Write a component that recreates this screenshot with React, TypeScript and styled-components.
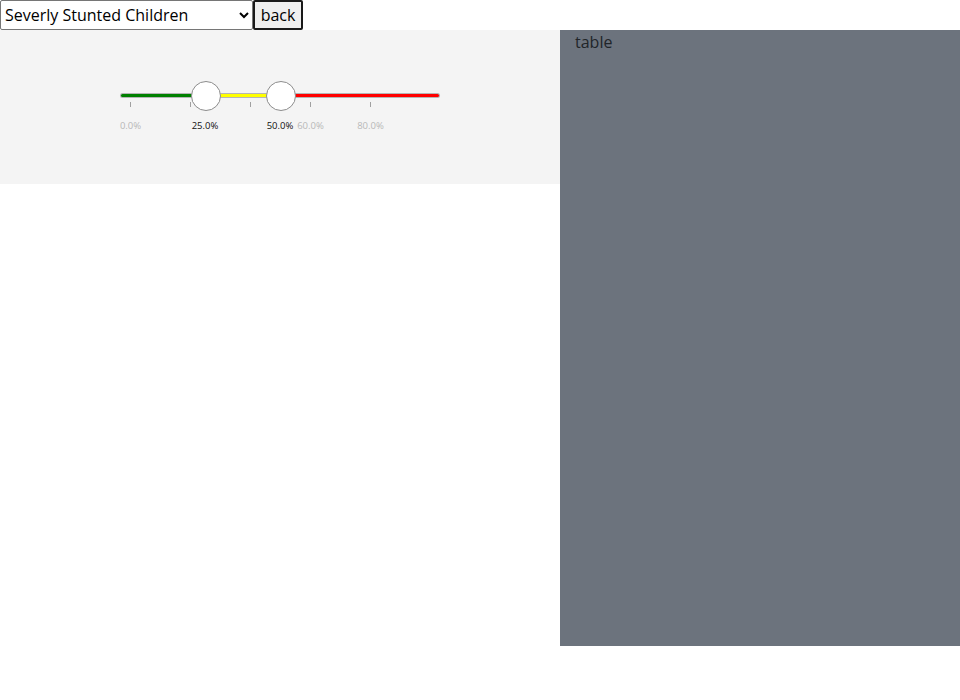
import React from "react";
import styled, { createGlobalStyle } from "styled-components";

const GlobalStyle = createGlobalStyle`
  body {
    margin: 0;
    font-family: "Open Sans", "Liberation Sans", sans-serif;
    background: #ffffff;
    color: #212529;
  }
`;

const TopBar = styled.div`
  display: flex;
  align-items: flex-start;
  height: 30px;
`;
const Select = styled.select`
  width: 253px;
  height: 30px;
  font-family: "Open Sans", sans-serif;
  font-size: 16px;
  color: #000;
  background: #fff;
  border: 1px solid #767676;
  border-radius: 2px;
  padding: 0;
  margin: 0;
`;
const BackButton = styled.button`
  width: 50px;
  height: 30px;
  font-family: "Open Sans", sans-serif;
  font-size: 16px;
  color: #000;
  background: #efefef;
  border: 2px solid #1a1a1a;
  border-radius: 2px;
  padding: 0;
  margin: 0;
`;

const Main = styled.div`
  display: flex;
  align-items: flex-start;
`;
const LeftPane = styled.div`
  width: 560px;
`;
const SliderPanel = styled.div`
  height: 154px;
  background: #f4f4f4;
  padding: 51px 0 0 120px;
  box-sizing: border-box;
`;
const RightPane = styled.div`
  width: 400px;
  height: 616px;
  background: #6c737d;
  padding: 1px 15px;
  box-sizing: border-box;
  font-size: 16px;
  color: #212529;
`;

// slider: track, ticks and labels flow top to bottom; handles sit over the track
const SliderBox = styled.div`
  position: relative;
  display: flex;
  flex-direction: column;
  width: 320px;
  padding-top: 12px;
`;
const Track = styled.div`
  display: flex;
  height: 3px;
  padding: 1px;
  border-radius: 3px;
  background: #b5b5b5;
`;
const Segment = styled.div<{ $color: string }>`
  height: 3px;
  background: ${(p) => p.$color};
  &:first-child {
    border-radius: 2px 0 0 2px;
  }
  &:last-child {
    flex: 1;
    border-radius: 0 2px 2px 0;
  }
`;
const TickRow = styled.div`
  display: flex;
  gap: 59px;
  padding: 4px 0 0 10px;
`;
const Tick = styled.div`
  width: 1px;
  height: 5px;
  background: #a0a0a0;
`;
const LabelRow = styled.div`
  display: flex;
  padding-top: 13px;
`;
const TickLabel = styled.div<{ $hidden?: boolean }>`
  width: 60px;
  text-align: center;
  font-size: 9.5px;
  line-height: 12px;
  color: #b8b8b8;
  visibility: ${(p) => (p.$hidden ? "hidden" : "visible")};
  &:first-child {
    margin-left: -19.5px;
  }
`;
const Handle = styled.div`
  position: absolute;
  top: 0;
  width: 28px;
  height: 28px;
  margin-left: -14px;
  border-radius: 50%;
  background: #fff;
  border: 1px solid #8c8c8c;
`;
const HandleLabel = styled.div`
  position: absolute;
  top: 38px;
  left: -7px;
  width: 40px;
  text-align: center;
  font-size: 9.5px;
  line-height: 12px;
  color: #111;
`;

const pos = (v: number) => 10 + v * 3;

const low = 25;
const high = 50;
const ticks = [0, 20, 40, 60, 80];
const crowded = (t: number) => Math.abs(pos(t) - pos(low)) < 35 || Math.abs(pos(t) - pos(high)) < 35;

const RangeSlider = () => (
  <SliderBox>
    <Track>
      <Segment $color="#008000" style={{ width: pos(low) - 1 }} />
      <Segment $color="#ffff00" style={{ width: pos(high) - pos(low) }} />
      <Segment $color="#ff0000" />
    </Track>
    <TickRow>
      {ticks.map((t) => (
        <Tick key={t} />
      ))}
    </TickRow>
    <LabelRow>
      {ticks.map((t) => (
        <TickLabel key={t} $hidden={t !== 60 && crowded(t)}>
          {t.toFixed(1)}%
        </TickLabel>
      ))}
    </LabelRow>
    {[low, high].map((v) => (
      <Handle key={v} style={{ left: pos(v) }}>
        <HandleLabel>{v.toFixed(1)}%</HandleLabel>
      </Handle>
    ))}
  </SliderBox>
);

const App = () => {
  return (
    <>
      <GlobalStyle />
      <TopBar>
        <Select defaultValue="severe">
          <option value="severe">Severly Stunted Children</option>
          <option value="stunted">Stunted Children</option>
        </Select>
        <BackButton>back</BackButton>
      </TopBar>
      <Main>
        <LeftPane>
          <SliderPanel>
            <RangeSlider />
          </SliderPanel>
        </LeftPane>
        <RightPane>table</RightPane>
      </Main>
    </>
  );
};

export default App;
